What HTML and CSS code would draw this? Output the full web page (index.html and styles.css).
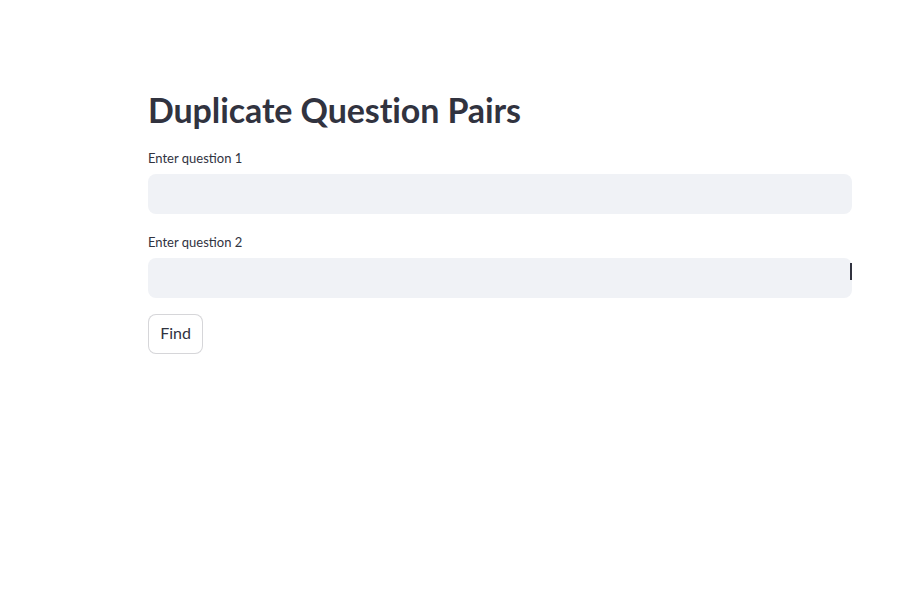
FILE: index.html
```html
<!DOCTYPE html>
<html>
<head>
<meta charset="utf-8">
<link rel="stylesheet" href="styles.css">
</head>
<body>
<main class="container">
  <h1 class="title">Duplicate Question Pairs</h1>
  <div class="field">
    <label class="label">Enter question 1</label>
    <div class="input-wrap"><input class="input" type="text"></div>
  </div>
  <div class="field">
    <label class="label">Enter question 2</label>
    <div class="input-wrap"><input class="input" type="text"><span class="cursor"></span></div>
  </div>
  <button class="btn">Find</button>
</main>
</body>
</html>
```
FILE: styles.css
```css
* { box-sizing: border-box; }
html, body { margin: 0; padding: 0; background: #fff; }
body { font-family: Lato, "Noto Sans", sans-serif; color: #31333f; }
.container {
  width: 704px;
  margin-left: 148px;
  padding-top: 88px;
  display: flex;
  flex-direction: column;
}
.title {
  margin: 0 0 16px 0;
  font-size: 34px;
  font-weight: 700;
  line-height: 44px;
  color: #31333f;
  letter-spacing: -0.1px;
}
.field { display: flex; flex-direction: column; margin-bottom: 16px; }
.field + .field { margin-top: 2px; }
.label {
  font-size: 13px;
  line-height: 20px;
  height: 20px;
  margin-bottom: 6px;
}
.input-wrap { position: relative; }
.input {
  width: 100%;
  height: 40px;
  border: none;
  border-radius: 8px;
  background: #f0f2f6;
  outline: none;
  padding: 0 12px;
  font-size: 16px;
  font-family: inherit;
}
.cursor {
  position: absolute;
  left: 702px;
  top: 5px;
  width: 2px;
  height: 17px;
  background: #31333f;
}
.btn {
  align-self: flex-start;
  width: 55px;
  height: 40px;
  background: #fff;
  border: 1px solid rgba(49, 51, 63, 0.2);
  border-radius: 8px;
  font-family: inherit;
  font-size: 16px;
  line-height: 20px;
  color: #31333f;
  padding: 0 0 3px 0;
}
```
